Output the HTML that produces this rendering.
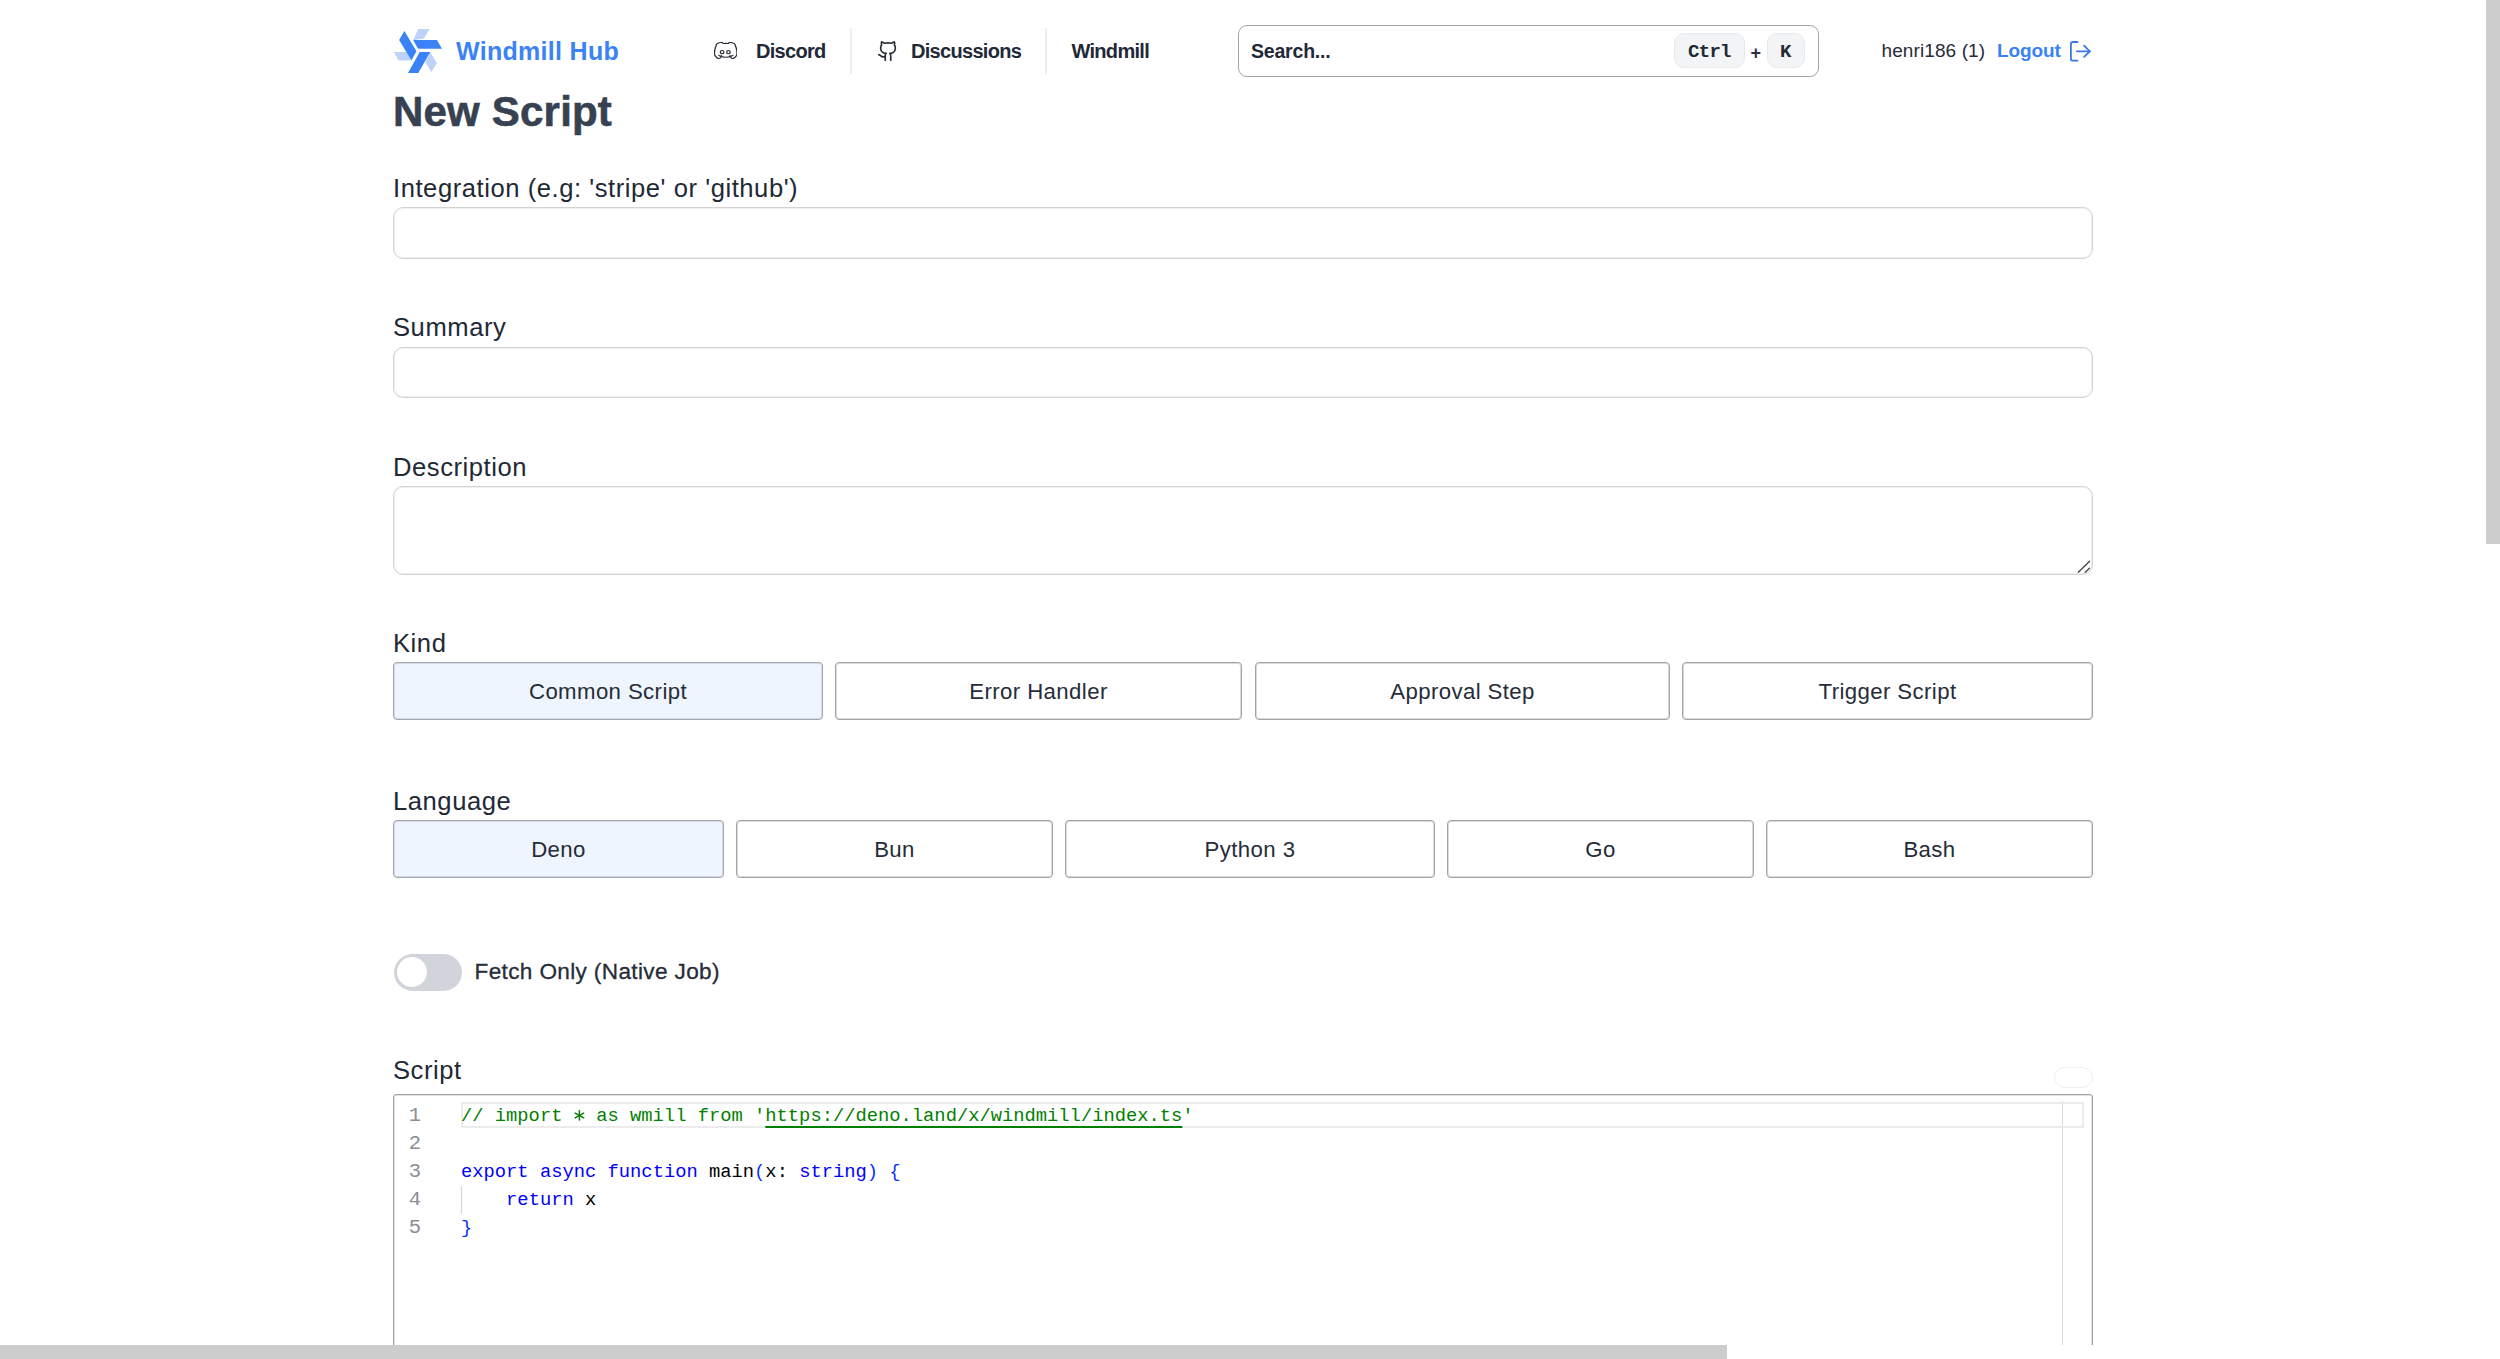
<!DOCTYPE html>
<html><head><meta charset="utf-8">
<style>
html,body{margin:0;padding:0;width:2500px;height:1359px;overflow:hidden;background:#fff;}
body{position:relative;font-family:"Liberation Sans",sans-serif;color:#1f2937;}
.a{position:absolute;white-space:nowrap;line-height:1;}
.nav{font-weight:bold;font-size:20px;color:#1f2937;letter-spacing:-0.7px;}
.sep{position:absolute;top:28px;width:2px;height:46px;background:#eceef1;}
.lbl{font-size:25.6px;color:#222936;letter-spacing:0.55px;}
.inp{position:absolute;left:393px;width:1698px;border:1px solid #d3d3d3;box-shadow:inset 0 0 0 1px #f0f0f0;border-radius:10px;background:#fff;}
.btn{position:absolute;top:0;height:58px;border:1px solid #a2a4a8;box-shadow:inset 0 0 0 1px #d9dadd;border-radius:4px;background:#fff;box-sizing:border-box;}
.btn span{position:absolute;left:0;right:0;text-align:center;top:17.8px;font-size:22.2px;letter-spacing:0.4px;color:#262c38;line-height:1;}
.sel{background:#eff5fe;border-color:#a3a7af;box-shadow:inset 0 0 0 1px #d6dbe3;}
.kbd{position:absolute;top:33px;height:35px;background:#f3f4f6;border:1px solid #e8e9ec;border-radius:10px;box-sizing:border-box;}
.code{font-family:"Liberation Mono",monospace;font-size:18.8px;}
</style></head>
<body>
<!-- header -->
<svg class="a" style="left:390px;top:25px" width="56" height="52" viewBox="390 25 56 52">
  <polygon points="418.3,29 429.6,29 423.9,38.6 413.1,40.2" fill="#bdd3fa"/>
  <polygon points="393.8,52.1 412,52.1 411.4,60.6 398.7,60.6" fill="#bdd3fa"/>
  <polygon points="430.3,52.3 436.9,63.2 431.3,71.9 425.4,62.2" fill="#bdd3fa"/>
  <polygon points="404.4,30.9 416.5,51.3 411.4,60.2 399.1,40" fill="#3b82f6"/>
  <polygon points="413.1,40 436.9,40 442,48.7 418.1,48.7" fill="#3b82f6"/>
  <polygon points="419.7,52.1 430.3,52.1 418.3,72.9 408,72.9" fill="#3b82f6"/>
</svg>
<div class="a" style="left:456px;top:38.5px;font-size:25px;font-weight:bold;color:#3b82f6;letter-spacing:0.3px;">Windmill Hub</div>

<svg class="a" style="left:713.5px;top:41.7px" width="23.5" height="17" viewBox="2.2 3.7 19.6 16.6" preserveAspectRatio="none" fill="none" stroke="#2b303a" stroke-width="1.1" stroke-linecap="round" stroke-linejoin="round">
  <ellipse cx="8.95" cy="13.6" rx="1.45" ry="1.6"/><ellipse cx="14.25" cy="13.6" rx="1.45" ry="1.6"/>
  <path d="M15.5 17c0 1 1.5 3 2 3c1.5 0 2.833 -1.667 3.5 -3c.667 -1.667 .5 -5.833 -1.5 -11.5c-1.457 -1.015 -3 -1.34 -4.5 -1.5l-.972 1.223a11.913 11.913 0 0 0 -4.053 0l-.975 -1.223c-1.5 .16 -3.043 .485 -4.5 1.5c-2 5.667 -2.167 9.833 -1.5 11.5c.667 1.333 2 3 3.5 3c.5 0 2 -2 2 -3"/>
  <path d="M6.3 16.8 Q12.1 20.4 17.9 16.8"/>
</svg>
<div class="a nav" style="left:756px;top:40.5px;">Discord</div>
<div class="sep" style="left:850px;"></div>
<svg class="a" style="left:876.7px;top:40px" width="22" height="22" viewBox="0 0 24 24" fill="none" stroke="#2b303a" stroke-width="1.85" stroke-linecap="round" stroke-linejoin="round">
  <path d="M15 22v-4a4.8 4.8 0 0 0-1-3.5c3 0 6-2 6-5.5.08-1.25-.27-2.48-1-3.5.28-1.15.28-2.35 0-3.5 0 0-1 0-3 1.5-2.64-.5-5.36-.5-8 0C6 2 5 2 5 2c-.3 1.15-.3 2.35 0 3.5A5.403 5.403 0 0 0 4 9c0 3.5 3 5.500 6 5.5-.39.49-.68 1.05-.85 1.650-.17.6-.22 1.230-.15 1.850v4"/>
  <path d="M9 18c-4.51 2-5-2-7-2"/>
</svg>
<div class="a nav" style="left:911px;top:40.5px;">Discussions</div>
<div class="sep" style="left:1045px;"></div>
<div class="a nav" style="left:1071.5px;top:40.5px;">Windmill</div>

<div class="a" style="left:1238px;top:25px;width:581px;height:52px;border:1.6px solid #a2a4a8;border-radius:9px;box-sizing:border-box;"></div>
<div class="a nav" style="left:1251px;top:42px;font-size:19.5px;letter-spacing:-0.2px;">Search...</div>
<div class="kbd" style="left:1674px;width:71px;"></div>
<div class="a code" style="left:1688px;top:43px;font-weight:bold;font-size:19px;letter-spacing:-0.7px;color:#1f2937;">Ctrl</div>
<div class="a" style="left:1750.5px;top:43.5px;font-weight:bold;font-size:18px;color:#2a2f45;">+</div>
<div class="kbd" style="left:1767px;width:38px;"></div>
<div class="a code" style="left:1780px;top:43px;font-weight:bold;font-size:19px;color:#1f2937;">K</div>

<div class="a" style="left:1881.5px;top:41px;font-size:19px;color:#262c38;letter-spacing:0.1px;">henri186 (1)</div>
<div class="a" style="left:1997px;top:41.2px;font-size:19px;font-weight:bold;color:#3b82f6;letter-spacing:-0.1px;">Logout</div>
<svg class="a" style="left:2068px;top:39px" width="26" height="24" viewBox="0 0 26 24" fill="none" stroke="#3b78e7" stroke-width="1.8" stroke-linecap="round" stroke-linejoin="round">
  <path d="M9.5 3 H5.2 Q2.9 3 2.9 5.3 V19.4 Q2.9 21.7 5.2 21.7 H9.5"/><path d="M8.8 12.3 H22"/><path d="M16.1 6.7 L21.8 12.3 L16.1 17.9"/>
</svg>

<!-- title -->
<div class="a" style="left:393px;top:90.5px;font-size:42px;font-weight:bold;color:#374151;letter-spacing:0.2px;-webkit-text-stroke:0.6px #374151;">New Script</div>

<div class="a lbl" style="left:393px;top:176px;">Integration (e.g: 'stripe' or 'github')</div>
<div class="inp" style="top:207px;height:50px;"></div>

<div class="a lbl" style="left:393px;top:315.2px;">Summary</div>
<div class="inp" style="top:347px;height:49px;"></div>

<div class="a lbl" style="left:393px;top:454.5px;">Description</div>
<div class="inp" style="top:486px;height:87px;"></div>
<svg class="a" style="left:2070px;top:555px" width="25" height="25" viewBox="2070 555 25 25" stroke="#4a4a4a" stroke-width="1.4" stroke-linecap="round">
  <line x1="2078.3" y1="572.3" x2="2089.6" y2="561.2"/><line x1="2085.2" y1="572.3" x2="2089.5" y2="568.2"/>
</svg>

<div class="a lbl" style="left:393px;top:631px;">Kind</div>
<div class="a" style="left:0;top:662px;width:2500px;height:58px;">
  <div class="btn sel" style="left:393px;width:430px;"><span>Common Script</span></div>
  <div class="btn" style="left:835px;width:407px;"><span>Error Handler</span></div>
  <div class="btn" style="left:1255px;width:415px;"><span>Approval Step</span></div>
  <div class="btn" style="left:1682px;width:411px;"><span>Trigger Script</span></div>
</div>

<div class="a lbl" style="left:393px;top:789px;">Language</div>
<div class="a" style="left:0;top:820px;width:2500px;height:58px;">
  <div class="btn sel" style="left:393px;width:331px;"><span>Deno</span></div>
  <div class="btn" style="left:736px;width:317px;"><span>Bun</span></div>
  <div class="btn" style="left:1065px;width:370px;"><span>Python 3</span></div>
  <div class="btn" style="left:1447px;width:307px;"><span>Go</span></div>
  <div class="btn" style="left:1766px;width:327px;"><span>Bash</span></div>
</div>

<!-- toggle -->
<div class="a" style="left:394px;top:954px;width:68px;height:37px;border-radius:19px;background:#d1d5db;"></div>
<div class="a" style="left:395.5px;top:955.5px;width:32px;height:32.5px;border-radius:50%;background:#fff;border:1px solid #cfd2d6;box-sizing:border-box;"></div>
<div class="a" style="left:474.5px;top:960.8px;font-size:22.6px;color:#262c38;letter-spacing:0.35px;-webkit-text-stroke:0.3px #262c38;">Fetch Only (Native Job)</div>

<div class="a lbl" style="left:393px;top:1057.5px;">Script</div>
<div class="a" style="left:2054px;top:1067px;width:39px;height:21px;border:1px solid #eeeeee;border-radius:11px;box-sizing:border-box;"></div>

<!-- editor -->
<div class="a" style="left:393px;top:1094px;width:1700px;height:300px;border:1px solid #a0a2a6;box-shadow:inset 0 0 0 1px #dfe0e2;border-radius:3px;box-sizing:border-box;"></div>
<div class="a" style="left:2062px;top:1101px;width:1px;height:260px;background:#d9d9d9;"></div>
<div class="a" style="left:460.5px;top:1101.8px;width:1623px;height:26.4px;border:2px solid #ececec;box-sizing:border-box;"></div>
<div class="a" style="left:461px;top:1186px;width:1px;height:28px;background:#d3d3d3;"></div>

<div class="a code" style="left:400px;top:1101.5px;width:30px;text-align:center;color:#8b8e94;line-height:28.15px;font-size:20.5px;white-space:pre;">1
2
3
4
5</div>
<div class="a code" style="left:461px;top:1101.5px;line-height:28.15px;white-space:pre;color:#000;"><span style="color:#008000">// import   as wmill from '<span style="text-decoration:underline;text-decoration-thickness:2px;text-underline-offset:5px;">https://deno.land/x/windmill/index.ts</span>'</span>

<span style="color:#0000ff">export</span> <span style="color:#0000ff">async</span> <span style="color:#0000ff">function</span> main<span style="color:#0431fa">(</span>x: <span style="color:#0000ff">string</span><span style="color:#0431fa">)</span> <span style="color:#0431fa">{</span>
    <span style="color:#0000ff">return</span> x
<span style="color:#0431fa">}</span></div>

<svg class="a" style="left:570px;top:1105px" width="20" height="20" viewBox="570 1105 20 20" stroke="#0a7d0a" stroke-width="1.5" stroke-linecap="butt">
  <line x1="579.4" y1="1110.2" x2="579.4" y2="1120.6"/><line x1="574.6" y1="1112.8" x2="584.2" y2="1118.2"/><line x1="574.6" y1="1118.2" x2="584.2" y2="1112.8"/>
</svg>
<!-- scrollbars -->
<div class="a" style="left:0;top:1345px;width:2500px;height:14px;background:#fff;"></div>
<div class="a" style="left:2486px;top:0;width:14px;height:544px;background:#cdcdcd;"></div>
<div class="a" style="left:0;top:1345px;width:1727px;height:14px;background:#cdcdcd;"></div>
</body></html>
